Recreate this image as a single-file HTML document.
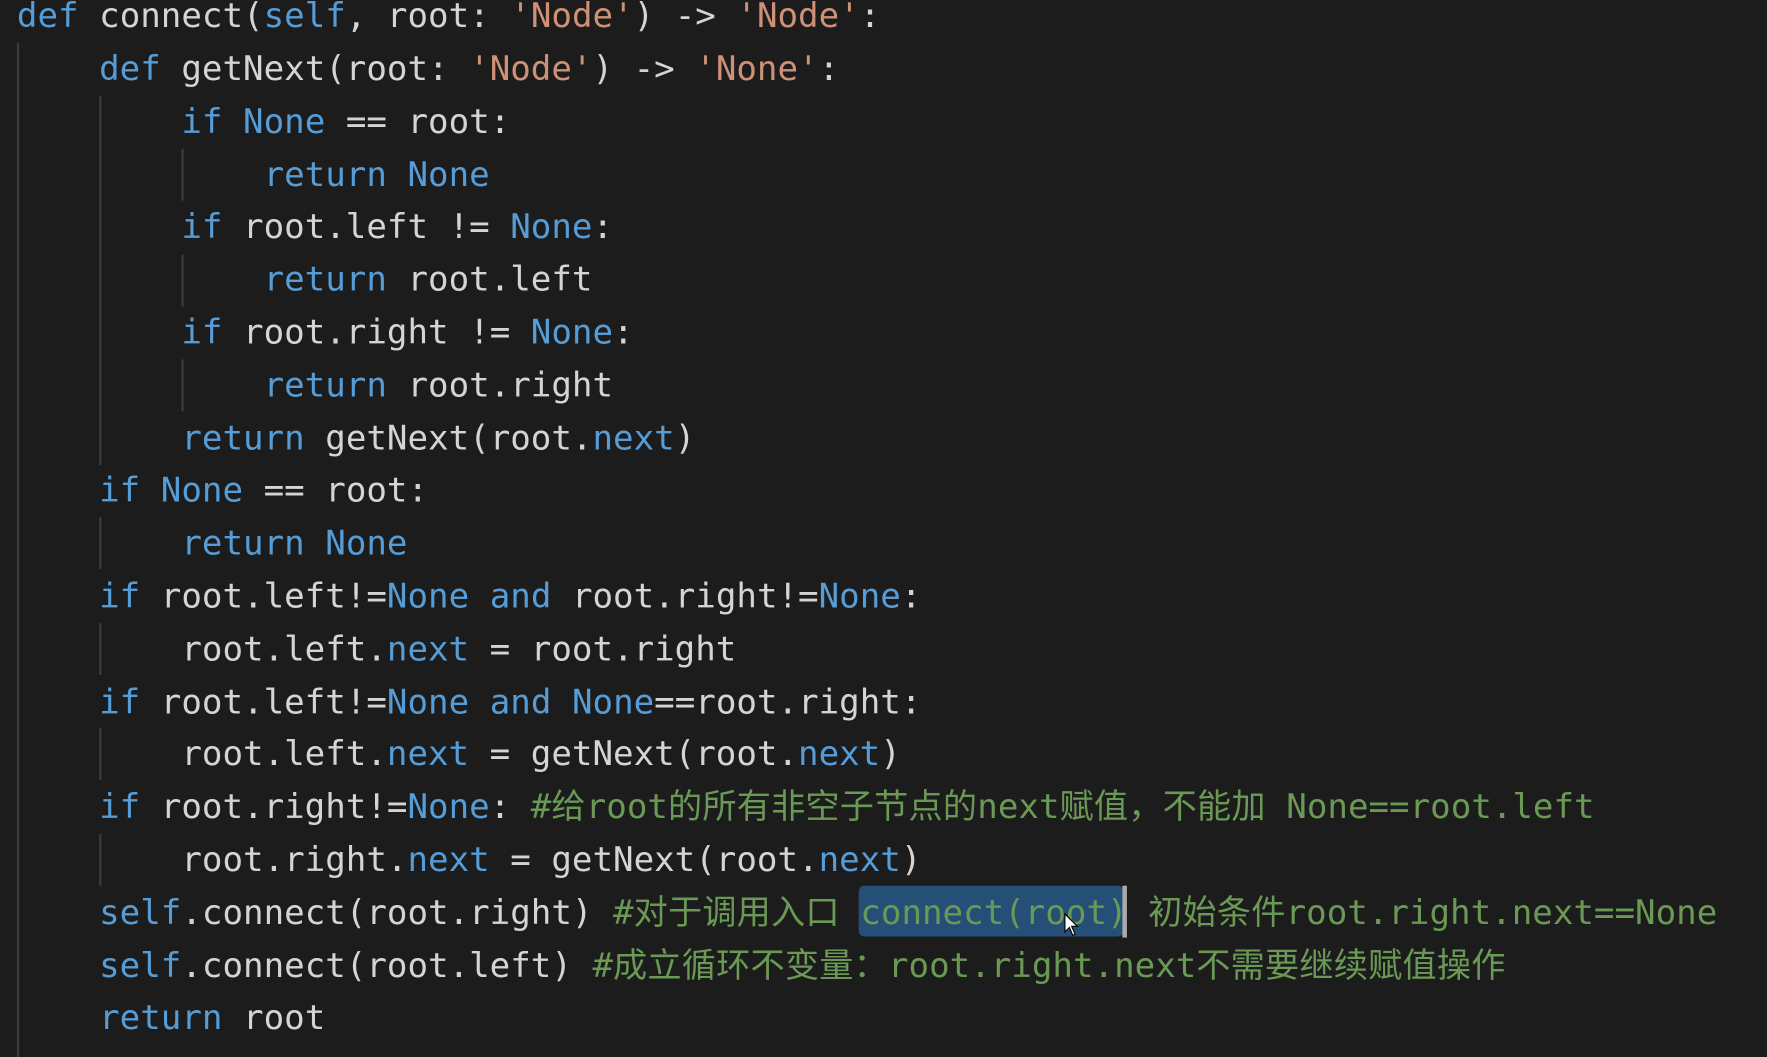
<!DOCTYPE html>
<html><head><meta charset="utf-8"><style>
html,body{margin:0;padding:0;width:1767px;height:1040px;background:#1c1c1c;overflow:hidden}
.wrap{position:absolute;left:0;top:0;width:1568px;height:923px;transform:scale(1.1269);transform-origin:0 0}
.code{position:absolute;left:15px;top:-7.8px;font-family:"DejaVu Sans Mono","Liberation Mono","Noto Sans CJK SC",monospace;font-size:30.3px;line-height:46.8px;color:#d4d4d4;white-space:pre}
.k{color:#569cd6}.s{color:#ce9178}.c{color:#6a9955}
.z{letter-spacing:0.2px}
.g{position:absolute;width:2px;background:#3c3c3c}
.sel{position:absolute;left:762px;top:786px;width:235px;height:45px;background:#264f78;border-radius:5px}
.cur{position:absolute;left:996px;top:786px;width:4px;height:46px;background:#aaa}
</style></head><body><div class="wrap">
<div class="g" style="left:15px;top:38px;height:900px"></div>
<div class="g" style="left:88px;top:85px;height:328px"></div>
<div class="g" style="left:161px;top:132px;height:46px"></div>
<div class="g" style="left:161px;top:226px;height:46px"></div>
<div class="g" style="left:161px;top:319px;height:46px"></div>
<div class="g" style="left:88px;top:459px;height:46px"></div>
<div class="g" style="left:88px;top:553px;height:46px"></div>
<div class="g" style="left:88px;top:646px;height:46px"></div>
<div class="g" style="left:88px;top:740px;height:46px"></div>
<div class="sel"></div><div class="cur"></div>
<div class="code"><span class="k">def</span> connect(<span class="k">self</span>, root: <span class="s">'Node'</span>) -&gt; <span class="s">'Node'</span>:
    <span class="k">def</span> getNext(root: <span class="s">'Node'</span>) -&gt; <span class="s">'None'</span>:
        <span class="k">if</span> <span class="k">None</span> == root:
            <span class="k">return</span> <span class="k">None</span>
        <span class="k">if</span> root.left != <span class="k">None</span>:
            <span class="k">return</span> root.left
        <span class="k">if</span> root.right != <span class="k">None</span>:
            <span class="k">return</span> root.right
        <span class="k">return</span> getNext(root.<span class="k">next</span>)
    <span class="k">if</span> <span class="k">None</span> == root:
        <span class="k">return</span> <span class="k">None</span>
    <span class="k">if</span> root.left!=<span class="k">None</span> <span class="k">and</span> root.right!=<span class="k">None</span>:
        root.left.<span class="k">next</span> = root.right
    <span class="k">if</span> root.left!=<span class="k">None</span> <span class="k">and</span> <span class="k">None</span>==root.right:
        root.left.<span class="k">next</span> = getNext(root.<span class="k">next</span>)
    <span class="k">if</span> root.right!=<span class="k">None</span>: <span class="c">#<span class="z">给</span>root<span class="z">的所有非空子节点的</span>next<span class="z">赋值，不能加</span> None==root.left</span>
        root.right.<span class="k">next</span> = getNext(root.<span class="k">next</span>)
    <span class="k">self</span>.connect(root.right) <span class="c">#<span class="z">对于调用入口</span> connect(root) <span class="z">初始条件</span>root.right.next==None</span>
    <span class="k">self</span>.connect(root.left) <span class="c">#<span class="z">成立循环不变量：</span>root.right.next<span class="z">不需要继续赋值操作</span></span>
    <span class="k">return</span> root</div>
<svg style="position:absolute;left:944px;top:810px" width="14" height="22" viewBox="0 0 14 22"><path d="M1 1 L1 17 L5 13 L8 20 L10 19 L7 12 L12 12 Z" fill="#fff" stroke="#000" stroke-width="1"/></svg>
</div></body></html>
